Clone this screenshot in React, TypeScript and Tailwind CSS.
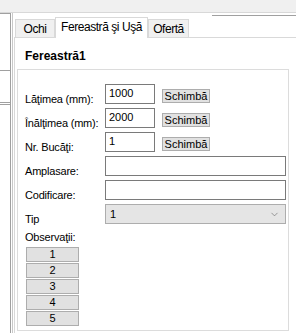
import { ChevronDown } from 'lucide-react';

const labelFont = { fontFamily: '"Liberation Sans", Arial, sans-serif' };

function Label({ text }: { text: string }) {
  return (
    <div className="w-[80px] shrink-0 whitespace-nowrap pt-[9px] text-[11px] leading-[13px] tracking-[-0.2px] text-black">
      {text}
    </div>
  );
}

function Field({ label, value }: { label: string; value: string }) {
  return (
    <div className="flex h-[20px] items-start">
      <Label text={label} />
      <div className="h-[20px] w-[50px] shrink-0 border border-[#7a7a7a] bg-white pl-[3px] text-[11px] leading-[17px] text-black">
        {value}
      </div>
      <button className="ml-[7px] mt-[5px] h-[14px] w-[48px] border border-[#adadad] bg-[#e1e1e1] text-[11px] leading-[12px] text-black">
        Schimbă
      </button>
    </div>
  );
}

function WideField({ label }: { label: string }) {
  return (
    <div className="flex h-[20px] items-start">
      <Label text={label} />
      <div className="h-[20px] w-[181px] shrink-0 border border-[#7a7a7a] bg-white" />
    </div>
  );
}

export default function App() {
  const tabs = ['Ochi', 'Fereastră şi Uşă', 'Ofertă'];

  return (
    <div className="flex h-[333px] w-[296px] flex-col overflow-hidden bg-white" style={labelFont}>
      {/* Top bar */}
      <div className="h-[13px] shrink-0 border-b border-[#d8d8d8] bg-[#f0f0f0]" />

      <div className="flex min-h-0 flex-1">
        {/* Left panel */}
        <div className="flex w-[10px] shrink-0 flex-col">
          <div className="h-[57px] border-t border-[#a0a0a0]" />
          <div className="h-[32px] border-t border-[#a0a0a0]" />
          <div className="h-[2px] border-t border-[#a0a0a0]" />
          <div className="border-t border-[#a0a0a0]" />
        </div>
        {/* Splitter */}
        <div className="w-[1px] shrink-0 bg-[#a0a0a0]" />
        <div className="w-[1px] shrink-0" />
        <div className="w-[1px] shrink-0 bg-[#c8c8c8]" />
        <div className="w-[1px] shrink-0" />

        {/* Tab control */}
        <div className="flex w-[300px] shrink-0 flex-col">
          <div className="flex h-[24px] shrink-0 items-end pl-[1px]">
            {tabs.map((t, i) =>
              i === 1 ? (
                <div
                  key={t}
                  className="relative z-10 -mb-[1px] flex h-[21px] w-[93px] items-start justify-center whitespace-nowrap border border-b-0 border-[#d9d9d9] bg-white pt-[2px] text-[12px] leading-[15px] tracking-[-0.45px] text-black"
                >
                  {t}
                </div>
              ) : (
                <div
                  key={t}
                  className={`flex h-[18px] ${i === 0 ? 'w-[40px]' : 'w-[41px]'} items-start justify-center whitespace-nowrap border border-b-0 border-[#d9d9d9] bg-[#f0f0f0] pt-[2px] text-[12px] leading-[15px] tracking-[-0.45px] text-black`}
                >
                  {t}
                </div>
              ),
            )}
            <div className="ml-[23px] h-[22px] flex-1 border-t border-[#a0a0a0]" />
          </div>

          <div className="flex flex-1 flex-col border-l border-t border-[#d9d9d9] pl-[2px]">
            <div className="mt-[11px] h-[14px] pl-[8px] text-[12px] font-bold leading-[14px] text-black">
              Fereastră1
            </div>
            <div className="mt-[6px] flex h-[262px] w-[272px] flex-col border border-[#dcdcdc] pl-[7px] pt-[14px]">
              <div className="flex flex-col gap-[4px]">
                <Field label="Lăţimea (mm):" value="1000" />
                <Field label="Înălţimea (mm):" value="2000" />
                <Field label="Nr. Bucăţi:" value="1" />
                <WideField label="Amplasare:" />
                <WideField label="Codificare:" />
                <div className="flex h-[20px] items-start">
                  <Label text="Tip" />
                  <div className="flex h-[20px] w-[181px] shrink-0 items-center justify-between border border-[#adadad] bg-[#e5e5e5] pl-[4px] pr-[5px] text-[11px] text-black">
                    <span>1</span>
                    <ChevronDown size={11} strokeWidth={1.3} className="text-[#606060]" />
                  </div>
                </div>
              </div>
              <div className="mt-[7px] text-[11px] leading-[13px] tracking-[-0.2px] text-black">Observaţii:</div>
              <div className="ml-[1px] mt-[3px] flex flex-col gap-[1px]">
                {['1', '2', '3', '4', '5'].map((n) => (
                  <button
                    key={n}
                    className="h-[15px] w-[53px] border border-[#adadad] bg-[#e1e1e1] text-[11px] leading-[13px] text-black"
                  >
                    {n}
                  </button>
                ))}
              </div>
            </div>
          </div>
        </div>
      </div>
    </div>
  );
}
